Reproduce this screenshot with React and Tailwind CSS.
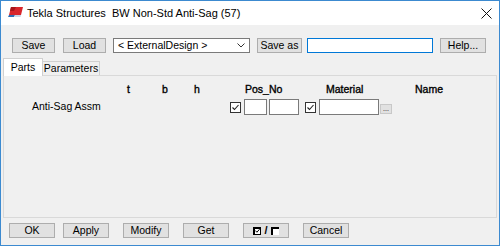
import React from "react";

const ui = { fontFamily: '"Liberation Sans Narrow", "Liberation Sans", Arial, sans-serif' };

function Btn({ w, children, className = "" }) {
  return (
    <div
      className={`h-[15px] flex items-center justify-center bg-[#e1e1e1] border border-[#adadad] text-[10.5px] leading-none text-black ${w} ${className}`}
    >
      {children}
    </div>
  );
}

function Check({ className = "" }) {
  return (
    <div className={`w-[11px] h-[11px] border border-[#333] bg-white flex items-center justify-center ${className}`}>
      <svg width="9" height="9" viewBox="0 0 9 9">
        <path d="M1.5 4.5 L3.5 6.5 L7.5 2" fill="none" stroke="#222" strokeWidth="1.1" />
      </svg>
    </div>
  );
}

function Field({ w, className = "" }) {
  return <div className={`h-[16px] bg-white border border-[#7a7a7a] ${w} ${className}`} />;
}

export default function App() {
  return (
    <div className="w-[500px] h-[246px] border border-[#3c8ad0] flex flex-col bg-[#f0f0f0]" style={ui}>
      {/* title bar */}
      <div className="h-[24px] bg-white flex items-center shrink-0">
        <svg className="ml-[7px]" width="16" height="12" viewBox="0 0 16 12">
          <polygon points="3,0 15,0 13,8 1,8" fill="#d8262c" />
          <polygon points="3,0 8,0 6,4 2,4" fill="#a8161b" />
          <polygon points="1,8 7,8 6,10 0,10" fill="#2e6db4" />
          <polygon points="7,8 13,8 12.5,10 6,10" fill="#c9d5e6" />
        </svg>
        <span
          className="ml-[3px] text-[11px] text-black"
          style={{ fontFamily: '"Liberation Sans", Arial, sans-serif' }}
        >
          Tekla Structures&nbsp;&nbsp;BW Non-Std Anti-Sag (57)
        </span>
        <svg className="ml-auto mr-[7px]" width="11" height="11" viewBox="0 0 11 11">
          <path d="M0.5 0.5 L10.5 10.5 M10.5 0.5 L0.5 10.5" stroke="#111" strokeWidth="1" />
        </svg>
      </div>

      {/* toolbar row */}
      <div className="flex items-center mt-[13px] pl-[11px] shrink-0">
        <Btn w="w-[43px]">Save</Btn>
        <Btn w="w-[43px]" className="ml-[8px]">Load</Btn>
        <div className="ml-[7px] w-[137px] h-[15px] bg-white border border-[#7a7a7a] flex items-center pl-[4px] text-[10.5px] leading-none">
          <span>&lt; ExternalDesign &gt;</span>
          <svg className="ml-auto mr-[4px]" width="8" height="5" viewBox="0 0 8 5">
            <path d="M0.5 0.5 L4 4 L7.5 0.5" fill="none" stroke="#333" strokeWidth="1" />
          </svg>
        </div>
        <Btn w="w-[45px]" className="ml-[7px]">Save as</Btn>
        <div className="ml-[5px] w-[126px] h-[15px] bg-white border border-[#0078d7]" />
        <Btn w="w-[46px]" className="ml-[7px]">Help...</Btn>
      </div>

      {/* tabs */}
      <div className="flex items-end mt-[5px] pl-[2px] h-[17px] shrink-0 relative z-10 text-[10.5px]">
        <div className="w-[40px] h-[18px] bg-white border border-b-0 border-[#d0d0d0] flex items-center justify-center -mb-px">
          Parts
        </div>
        <div className="w-[57px] h-[14px] border border-b-0 border-l-0 border-[#d0d0d0] flex items-center justify-center">
          Parameters
        </div>
      </div>

      {/* panel */}
      <div className="mx-[2px] h-[143px] border border-[#d9d9d9] shrink-0 text-[10.5px] text-black">
        <div className="flex mt-[8px] h-[12px] items-center [-webkit-text-stroke:0.35px_#000]">
          <span className="ml-[123px] w-[35px]">t</span>
          <span className="w-[32px]">b</span>
          <span className="w-[51px]">h</span>
          <span className="w-[81px]">Pos_No</span>
          <span className="w-[89px]">Material</span>
          <span>Name</span>
        </div>
        <div className="flex items-center mt-[3px] h-[16px]">
          <span className="ml-[28px] w-[198px]">Anti-Sag Assm</span>
          <Check />
          <Field w="w-[23px]" className="ml-[3px]" />
          <Field w="w-[30px]" className="ml-[2px]" />
          <Check className="ml-[6px]" />
          <Field w="w-[60px]" className="ml-[3px]" />
          <div className="ml-[1px] mt-[4px] w-[12px] h-[10px] bg-[#e1e1e1] border border-[#c8c8c8] flex items-center justify-center text-[7px] leading-none pb-[2px]">
            ...
          </div>
        </div>
      </div>

      {/* bottom buttons */}
      <div className="flex items-center mt-[5px] pl-[8px] shrink-0">
        <Btn w="w-[46px]">OK</Btn>
        <Btn w="w-[46px]" className="ml-[8px]">Apply</Btn>
        <Btn w="w-[46px]" className="ml-[14px]">Modify</Btn>
        <Btn w="w-[46px]" className="ml-[14px]">Get</Btn>
        <Btn w="w-[46px]" className="ml-[14px] gap-[3px]">
          <div className="w-[8px] h-[8px] border-l-2 border-t-2 border-r border-b border-black bg-white flex items-center justify-center">
            <svg width="6" height="6" viewBox="0 0 6 6">
              <path d="M0.5 2.5 L2.3 4.5 L5.5 0.8" fill="none" stroke="#000" strokeWidth="1.2" />
            </svg>
          </div>
          <span className="font-bold text-[11px]">/</span>
          <div className="w-[8px] h-[8px] border-l-2 border-t-2 border-black bg-white" />
        </Btn>
        <Btn w="w-[46px]" className="ml-[14px]">Cancel</Btn>
      </div>
    </div>
  );
}
